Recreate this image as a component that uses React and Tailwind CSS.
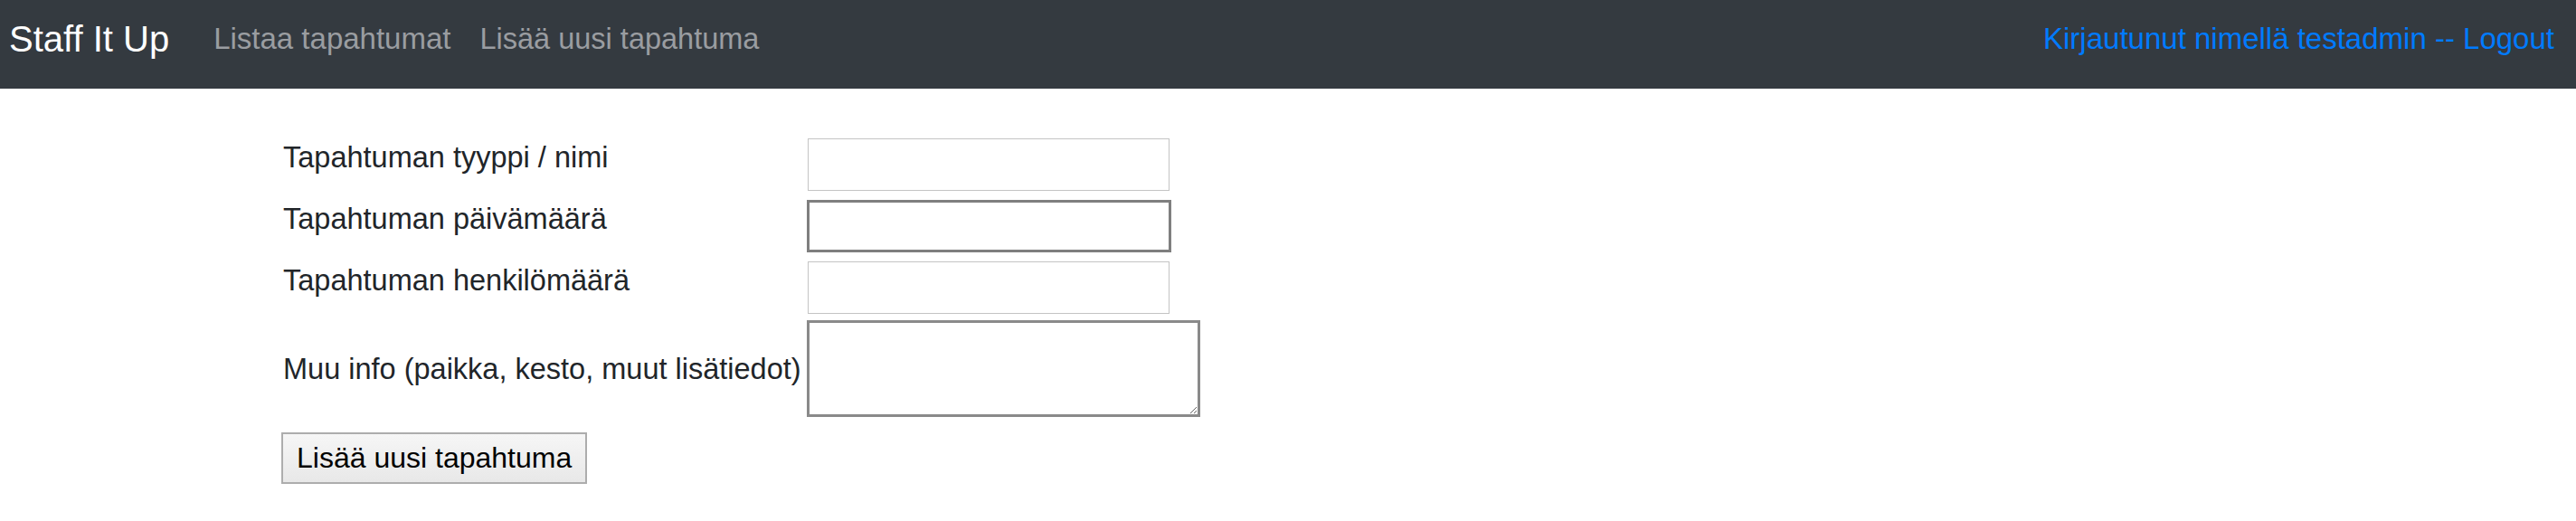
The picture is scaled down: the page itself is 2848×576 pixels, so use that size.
export default function App() {
  return (
    <div className="bg-white text-[#212529]" style={{ fontFamily: '"Liberation Sans", Arial, sans-serif' }}>
      <nav className="flex h-[98px] items-center bg-[#343a40] pb-[12px] pl-[10px] pr-[24px]">
        <span className="mr-[49px] text-[40px] leading-[1.2] text-white">Staff It Up</span>
        <a className="mr-[32px] text-[33px] leading-[1.2] text-[#9a9da1]">Listaa tapahtumat</a>
        <a className="text-[32.5px] leading-[1.2] text-[#9a9da1]">Lisää uusi tapahtuma</a>
        <a className="ml-auto text-[33px] leading-[1.2] text-[#007bff]">Kirjautunut nimellä testadmin -- Logout</a>
      </nav>
      <form className="flex flex-col pl-[313px] pt-[55px]">
        <div className="flex h-[58px] items-center">
          <label className="mb-[16px] w-[579px] shrink-0 text-[32.5px] leading-[48px]">Tapahtuman tyyppi / nimi</label>
          <input type="text" className="ml-px h-[58px] w-[400px] border border-[#c4c4c4] bg-white" />
        </div>
        <div className="mt-[10px] flex h-[58px] items-center">
          <label className="mb-[16px] w-[579px] shrink-0 text-[32.5px] leading-[48px]">Tapahtuman päivämäärä</label>
          <input type="text" className="h-[58px] w-[403px] border-[3px] border-[#7f7f7f] bg-white" />
        </div>
        <div className="mt-[10px] flex h-[58px] items-center">
          <label className="mb-[16px] w-[579px] shrink-0 text-[32.5px] leading-[48px]">Tapahtuman henkilömäärä</label>
          <input type="text" className="ml-px h-[58px] w-[400px] border border-[#c4c4c4] bg-white" />
        </div>
        <div className="mt-[7px] flex h-[107px] items-center">
          <label className="w-[579px] shrink-0 whitespace-nowrap text-[32.5px] leading-[48px]">Muu info (paikka, kesto, muut lisätiedot)</label>
          <textarea className="h-[107px] w-[435px] resize border-[3px] border-[#8a8a8a] bg-white" />
        </div>
        <div className="mt-[17px] flex">
          <button type="button" className="-ml-[2px] h-[57px] border-2 border-[#adadad] bg-gradient-to-b from-[#f6f6f6] to-[#e8e8e8] px-[15px] text-[32px] leading-[1.2] text-black">
            Lisää uusi tapahtuma
          </button>
        </div>
      </form>
    </div>
  );
}
